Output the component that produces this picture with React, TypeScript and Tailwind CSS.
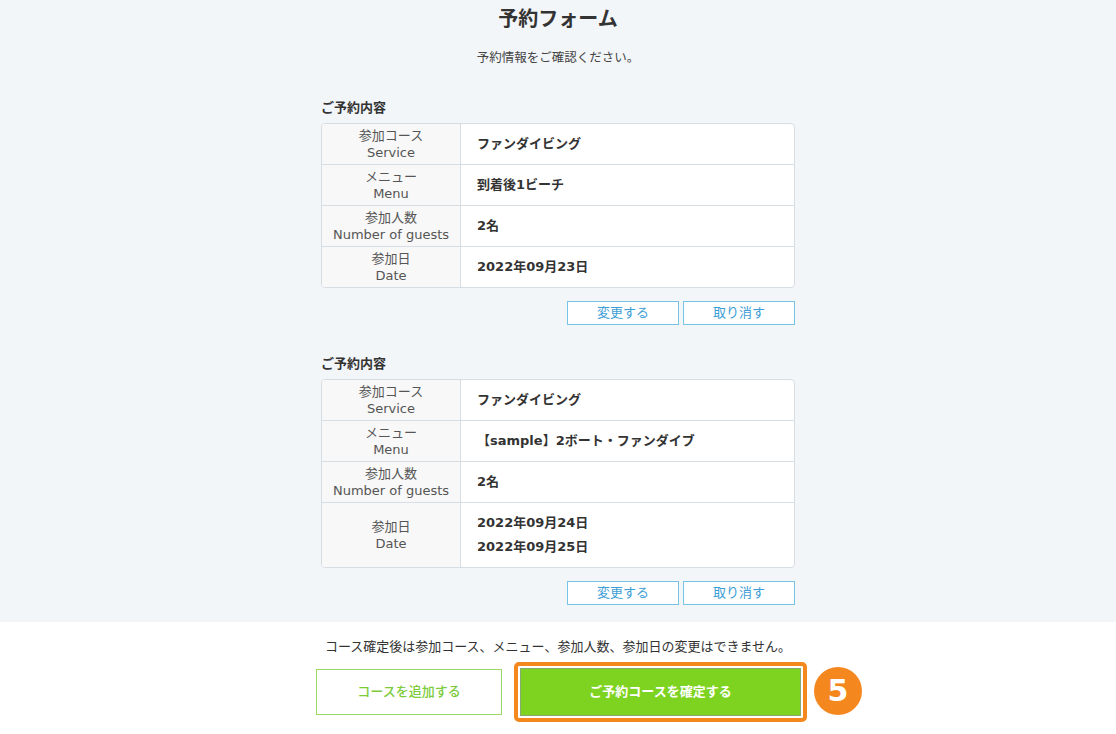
import React from 'react';

type Row = { label: string; sub: string; values: string[] };

const reservations: Row[][] = [
  [
    { label: '参加コース', sub: 'Service', values: ['ファンダイビング'] },
    { label: 'メニュー', sub: 'Menu', values: ['到着後1ビーチ'] },
    { label: '参加人数', sub: 'Number of guests', values: ['2名'] },
    { label: '参加日', sub: 'Date', values: ['2022年09月23日'] },
  ],
  [
    { label: '参加コース', sub: 'Service', values: ['ファンダイビング'] },
    { label: 'メニュー', sub: 'Menu', values: ['【sample】2ボート・ファンダイブ'] },
    { label: '参加人数', sub: 'Number of guests', values: ['2名'] },
    { label: '参加日', sub: 'Date', values: ['2022年09月24日', '2022年09月25日'] },
  ],
];

function ReservationBlock({ rows, first }: { rows: Row[]; first: boolean }) {
  return (
    <div className={first ? 'mt-[31px]' : 'mt-[30px]'}>
      <h2 className="text-[13px] leading-[18px] font-bold text-[#333]">ご予約内容</h2>
      <div className="mt-[6px] bg-white border border-[#d6dde3] rounded-[4px] overflow-hidden">
        {rows.map((row, i) => (
          <div
            key={i}
            className={`flex ${i < rows.length - 1 ? 'border-b border-[#d6dde3]' : ''}`}
          >
            <div className="w-[139px] shrink-0 bg-[#f8f8f8] border-r border-[#d6dde3] flex flex-col items-center justify-center text-[13px] leading-[17px] text-[#555] py-[3px] min-h-[40px]">
              <span>{row.label}</span>
              <span>{row.sub}</span>
            </div>
            <div className="flex-1 flex flex-col justify-center pl-[16px] py-[8px] text-[13px] leading-[24px] font-bold text-[#333]">
              {row.values.map((v) => (
                <span key={v}>{v}</span>
              ))}
            </div>
          </div>
        ))}
      </div>
      <div className="mt-[13px] flex justify-end gap-[4px]">
        <button className="w-[112px] h-[24px] bg-white border border-[#79c4e6] text-[#3d9ed6] text-[13px]">
          変更する
        </button>
        <button className="w-[112px] h-[24px] bg-white border border-[#79c4e6] text-[#3d9ed6] text-[13px]">
          取り消す
        </button>
      </div>
    </div>
  );
}

export default function App() {
  return (
    <div
      className="min-h-[734px] bg-white text-[#333]"
      style={{ fontFamily: '"DejaVu Sans", "Noto Sans CJK JP", sans-serif' }}
    >
      {/* Confirmation area */}
      <div className="bg-[#f3f6f9] pt-[5px] pb-[17px]">
        <h1 className="text-center text-[20px] leading-[28px] font-bold text-[#333]">予約フォーム</h1>
        <p className="mt-[15px] text-center text-[12.5px] leading-[20px] text-[#444]">予約情報をご確認ください。</p>
        <div className="w-[474px] mx-auto">
          {reservations.map((rows, i) => (
            <ReservationBlock key={i} rows={rows} first={i === 0} />
          ))}
        </div>
      </div>

      {/* Footer actions */}
      <div className="pt-[15px] pb-[10px]">
        <p className="text-center text-[13px] leading-[20px] text-[#333]">
          コース確定後は参加コース、メニュー、参加人数、参加日の変更はできません。
        </p>
        <div className="mt-[5px] flex justify-center items-center gap-[12px] pl-[7px]">
          <button className="w-[186px] h-[46px] bg-white border border-[#9bd667] text-[#7ccb3a] text-[13px] font-medium">
            コースを追加する
          </button>
          <div className="relative">
            <div className="w-[293px] h-[60px] border-[4px] border-[#f5871f] rounded-[5px] bg-white p-[2px]">
              <button className="w-full h-full bg-[#7ed321] border border-[#8aa873] text-white text-[13px] font-bold">
                ご予約コースを確定する
              </button>
            </div>
            <div className="absolute left-[300px] top-[5px] w-[48px] h-[48px] rounded-full bg-[#f5871f] flex items-center justify-center text-white text-[30px] font-bold leading-none">
              5
            </div>
          </div>
        </div>
      </div>
    </div>
  );
}
